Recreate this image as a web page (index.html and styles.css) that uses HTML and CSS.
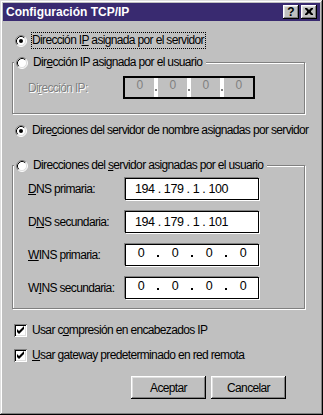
FILE: index.html
```html
<!DOCTYPE html>
<html lang="es">
<head>
<meta charset="utf-8">
<title>Configuración TCP/IP</title>
<link rel="stylesheet" href="styles.css">
</head>
<body>
<div class="window">
  <div class="titlebar">
    <span class="title">Configuración TCP/IP</span>
    <div class="tbtns">
      <span class="tbtn help">?</span>
      <span class="tbtn close"><svg width="8" height="7" viewBox="0 0 8 7"><path d="M0 0h2l2 2 2-2h2v1L6 3v1l2 2v1H6L4 5 2 7H0V6l2-2V3L0 1z" fill="#000"/></svg></span>
    </div>
  </div>
  <div class="content">
    <div class="opt first">
      <svg class="radio" viewBox="0 0 12 12"><circle cx="6" cy="6" r="5" fill="#fff"/><path d="M2.11 9.89A5.5 5.5 0 0 1 9.89 2.11" fill="none" stroke="#808080"/><path d="M9.89 2.11A5.5 5.5 0 0 1 2.11 9.89" fill="none" stroke="#fff"/><path d="M2.82 9.18A4.5 4.5 0 0 1 9.18 2.82" fill="none" stroke="#000"/><path d="M9.18 2.82A4.5 4.5 0 0 1 2.82 9.18" fill="none" stroke="#dfdfdf"/><circle cx="6" cy="6" r="2" fill="#000"/></svg>
      <span class="lbl focus">Dirección I<u>P</u> asignada por el servidor</span>
    </div>

    <fieldset class="group g1">
      <legend>
        <svg class="radio" viewBox="0 0 12 12"><circle cx="6" cy="6" r="5" fill="#fff"/><path d="M2.11 9.89A5.5 5.5 0 0 1 9.89 2.11" fill="none" stroke="#808080"/><path d="M9.89 2.11A5.5 5.5 0 0 1 2.11 9.89" fill="none" stroke="#fff"/><path d="M2.82 9.18A4.5 4.5 0 0 1 9.18 2.82" fill="none" stroke="#000"/><path d="M9.18 2.82A4.5 4.5 0 0 1 2.82 9.18" fill="none" stroke="#dfdfdf"/></svg>
        <span class="lbl">Dir<u>e</u>cción IP asignada por el usuario</span>
      </legend>
      <div class="gbody g1body">
        <div class="field">
          <span class="flabel off">Di<u>r</u>ección IP:</span>
          <div class="ipoff">
            <span class="oseg">0</span><span class="osep"></span><span class="oseg">0</span><span class="osep"></span><span class="oseg">0</span><span class="osep"></span><span class="oseg">0</span>
          </div>
        </div>
      </div>
    </fieldset>

    <div class="opt third">
      <svg class="radio" viewBox="0 0 12 12"><circle cx="6" cy="6" r="5" fill="#fff"/><path d="M2.11 9.89A5.5 5.5 0 0 1 9.89 2.11" fill="none" stroke="#808080"/><path d="M9.89 2.11A5.5 5.5 0 0 1 2.11 9.89" fill="none" stroke="#fff"/><path d="M2.82 9.18A4.5 4.5 0 0 1 9.18 2.82" fill="none" stroke="#000"/><path d="M9.18 2.82A4.5 4.5 0 0 1 2.82 9.18" fill="none" stroke="#dfdfdf"/><circle cx="6" cy="6" r="2" fill="#000"/></svg>
      <span class="lbl">Dire<u>c</u>ciones del servidor de nombre asignadas por servidor</span>
    </div>

    <fieldset class="group g2">
      <legend>
        <svg class="radio" viewBox="0 0 12 12"><circle cx="6" cy="6" r="5" fill="#fff"/><path d="M2.11 9.89A5.5 5.5 0 0 1 9.89 2.11" fill="none" stroke="#808080"/><path d="M9.89 2.11A5.5 5.5 0 0 1 2.11 9.89" fill="none" stroke="#fff"/><path d="M2.82 9.18A4.5 4.5 0 0 1 9.18 2.82" fill="none" stroke="#000"/><path d="M9.18 2.82A4.5 4.5 0 0 1 2.82 9.18" fill="none" stroke="#dfdfdf"/></svg>
        <span class="lbl">Direcciones del <u>s</u>ervidor asignadas por el usuario</span>
      </legend>
      <div class="gbody g2body">
        <div class="field">
          <span class="flabel"><u>D</u>NS primaria:</span>
          <div class="ipbox text">194 . 179 . 1 . 100</div>
        </div>
        <div class="field">
          <span class="flabel">D<u>N</u>S secundaria:</span>
          <div class="ipbox text">194 . 179 . 1 . 101</div>
        </div>
        <div class="field">
          <span class="flabel"><u>W</u>INS primaria:</span>
          <div class="ipbox segs">
            <span class="seg">0</span><span class="sep"></span><span class="seg">0</span><span class="sep"></span><span class="seg">0</span><span class="sep"></span><span class="seg">0</span>
          </div>
        </div>
        <div class="field">
          <span class="flabel">W<u>I</u>NS secundaria:</span>
          <div class="ipbox segs">
            <span class="seg">0</span><span class="sep"></span><span class="seg">0</span><span class="sep"></span><span class="seg">0</span><span class="sep"></span><span class="seg">0</span>
          </div>
        </div>
      </div>
    </fieldset>

    <div class="chk c1">
      <span class="box"><svg width="13" height="13" viewBox="0 0 13 13"><path d="M3 5L5 7L10 2V5L5 10L3 8Z" fill="#000"/></svg></span>
      <span class="lbl">Usar c<u>o</u>mpresión en encabezados IP</span>
    </div>
    <div class="chk c2">
      <span class="box"><svg width="13" height="13" viewBox="0 0 13 13"><path d="M3 5L5 7L10 2V5L5 10L3 8Z" fill="#000"/></svg></span>
      <span class="lbl"><u>U</u>sar gateway predeterminado en red remota</span>
    </div>

    <div class="buttons">
      <span class="btn">Aceptar</span>
      <span class="btn">Cancelar</span>
    </div>
  </div>
</div>
</body>
</html>
```

FILE: styles.css
```css
* { box-sizing: border-box; }
html, body { margin: 0; padding: 0; }
body {
  width: 323px;
  height: 415px;
  background: #c0c0c0;
  font-family: "Liberation Sans", Arial, sans-serif;
  font-size: 12px;
  letter-spacing: -0.65px;
  color: #000;
  overflow: hidden;
}
u { text-decoration: underline; text-underline-offset: 1px; }

.window {
  width: 323px;
  height: 415px;
  padding: 3px;
  background: #c0c0c0;
  box-shadow: inset -1px -1px 0 #000, inset 1px 1px 0 #dfdfdf,
              inset -2px -2px 0 #808080, inset 2px 2px 0 #fff;
}

.titlebar {
  height: 18px;
  background: #392a70;
  display: flex;
  align-items: center;
  justify-content: space-between;
  padding: 0 3px 0 3px;
}
.title {
  color: #fff;
  font-weight: bold;
  font-size: 12px;
  letter-spacing: 0;
  white-space: nowrap;
}
.tbtns { display: flex; gap: 2px; }
.tbtn {
  width: 16px;
  height: 14px;
  background: #c0c0c0;
  box-shadow: inset -1px -1px 0 #000, inset 1px 1px 0 #fff,
              inset -2px -2px 0 #808080, inset 2px 2px 0 #dfdfdf;
  display: flex;
  align-items: center;
  justify-content: center;
}
.help {
  font-weight: bold;
  font-size: 12px;
  letter-spacing: 0;
  line-height: 12px;
  padding-bottom: 1px;
}
.close svg { display: block; margin-bottom: 1px; }

.content { padding: 0 15px 0 9px; }

.opt {
  display: flex;
  align-items: center;
  height: 17px;
  padding-left: 3px;
}
.opt.first { margin-top: 11px; }
.opt.third { margin-top: 8px; }

.radio { width: 12px; height: 12px; flex: none; margin-right: 5px; display: block; }
.lbl { white-space: nowrap; line-height: 15px; }
.focus { outline: 1px dotted #000; padding-right: 1px; }

.group {
  margin: 0;
  padding: 0;
  min-width: 0;
  border: 1px solid #808080;
  box-shadow: inset 1px 1px 0 #fff, 1px 1px 0 #fff;
}
.g1 { margin-top: 5px; }
.g2 { margin-top: 18px; }
.group legend {
  margin-left: 1px;
  padding: 0 4px 0 2px;
  height: 17px;
  background: #c0c0c0;
  display: flex;
  align-items: center;
}

.gbody { padding-left: 15px; }
.g1body { padding-top: 5px; padding-bottom: 14px; }
.g2body {
  padding-top: 4px;
  padding-bottom: 9px;
  display: flex;
  flex-direction: column;
  gap: 11px;
}

.field { display: flex; align-items: center; }
.flabel { width: 97px; white-space: nowrap; }
.g1body .flabel { width: 95px; }
.off { color: #808080; text-shadow: 1px 1px 0 #fff; }

.ipoff {
  width: 132px;
  height: 23px;
  border: 2px solid #000;
  background: #fff;
  display: flex;
}
.oseg {
  width: 29px;
  background: #c0c0c0;
  color: #808080;
  display: flex;
  align-items: center;
  justify-content: center;
  padding-bottom: 5px;
}
.osep {
  width: 4px;
  display: flex;
  align-items: flex-end;
  justify-content: center;
  padding-bottom: 6px;
}
.osep::after {
  content: "";
  width: 2px;
  height: 2px;
  background: #808080;
}

.ipbox {
  width: 134px;
  height: 22px;
  background: #fff;
  border: 1px solid #000;
  box-shadow: -1px -1px 0 #808080, 1px 1px 0 #fff;
}
.ipbox.text {
  padding-left: 9px;
  display: flex;
  align-items: center;
  white-space: pre;
  font-size: 12.5px;
  letter-spacing: -0.4px;
}
.ipbox.segs { display: flex; }
.seg {
  width: 30px;
  display: flex;
  align-items: center;
  justify-content: center;
  padding-bottom: 5px;
  font-size: 12.5px;
}
.sep {
  width: 4px;
  display: flex;
  align-items: flex-end;
  justify-content: center;
  padding-bottom: 8px;
}
.sep::after {
  content: "";
  width: 2px;
  height: 2px;
  background: #000;
}

.chk {
  display: flex;
  align-items: center;
  height: 17px;
  padding-left: 2px;
}
.c1 { margin-top: 13px; }
.c2 { margin-top: 8px; }
.box {
  width: 13px;
  height: 13px;
  flex: none;
  margin-right: 5px;
  background: #fff;
  box-shadow: inset 1px 1px 0 #808080, inset -1px -1px 0 #fff,
              inset 2px 2px 0 #000, inset -2px -2px 0 #dfdfdf;
}
.box svg { display: block; }

.buttons {
  margin-top: 12px;
  display: flex;
  justify-content: flex-end;
  gap: 5px;
  padding-right: 19px;
}
.btn {
  width: 75px;
  height: 23px;
  display: flex;
  align-items: center;
  justify-content: center;
  background: #c0c0c0;
  box-shadow: inset -1px -1px 0 #000, inset 1px 1px 0 #fff,
              inset -2px -2px 0 #808080, inset 2px 2px 0 #dfdfdf;
}
```
